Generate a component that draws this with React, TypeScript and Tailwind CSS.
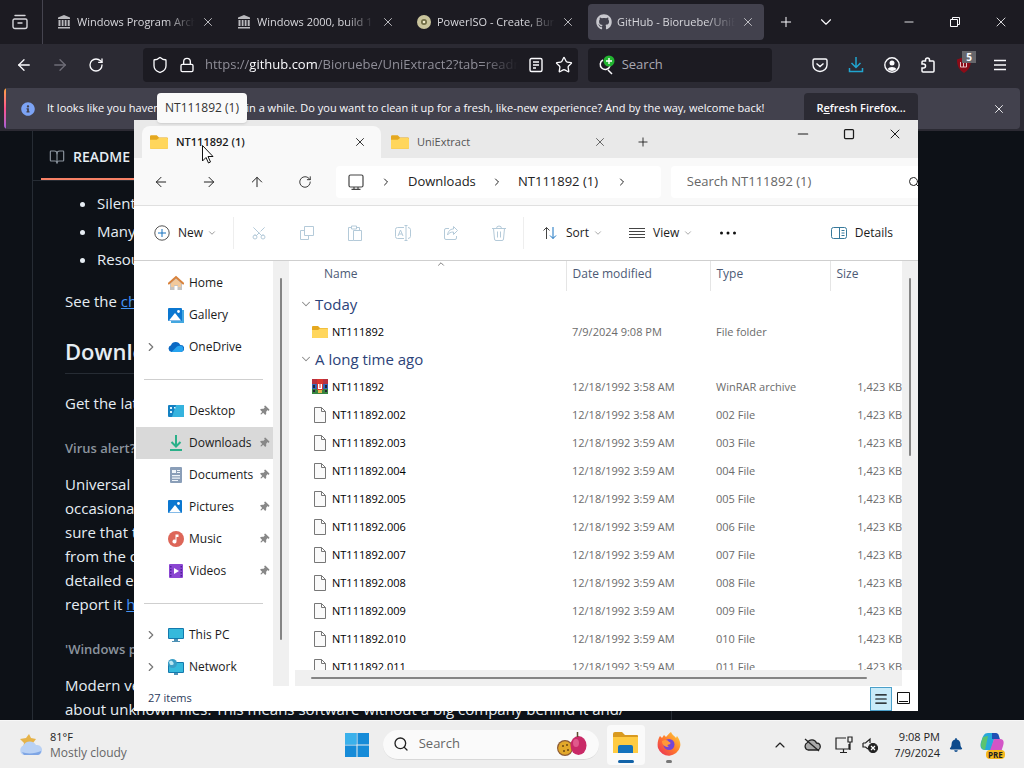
import type { ReactNode } from 'react'
import {
  AlignJustify,
  ArrowLeft,
  ArrowRight,
  ArrowUp,
  BookOpen,
  ChevronDown,
  ChevronRight,
  ChevronUp,
  Lock,
  Minus,
  Plus,
  RotateCw,
  Scissors,
  Search,
  Shield,
  Square,
  Star,
  X,
} from 'lucide-react'
import { FaBell, FaGithub, FaInfoCircle, FaThumbtack } from 'react-icons/fa'

const browserTabs = [
  { title: 'Windows Program Archive', icon: 'archive' },
  { title: 'Windows 2000, build 1', icon: 'archive' },
  { title: 'PowerISO - Create, Burn', icon: 'disc' },
  { title: 'GitHub - Bioruebe/UniExtract2', icon: 'github', active: true },
]

const places = [
  { name: 'Home', icon: 'home' },
  { name: 'Gallery', icon: 'gallery' },
  { name: 'OneDrive', icon: 'onedrive', expandable: true },
]

const pinned = [
  { name: 'Desktop', icon: 'desktop', pin: true },
  { name: 'Downloads', icon: 'downloads', pin: true, selected: true },
  { name: 'Documents', icon: 'documents', pin: true },
  { name: 'Pictures', icon: 'pictures', pin: true },
  { name: 'Music', icon: 'music', pin: true },
  { name: 'Videos', icon: 'videos', pin: true },
]

const devices = [
  { name: 'This PC', icon: 'pc', expandable: true },
  { name: 'Network', icon: 'network', expandable: true },
]

const oldFiles = [
  { name: 'NT111892', date: '12/18/1992 3:58 AM', type: 'WinRAR archive', icon: 'rar' },
  { name: 'NT111892.002', date: '12/18/1992 3:58 AM', type: '002 File', icon: 'file' },
  { name: 'NT111892.003', date: '12/18/1992 3:59 AM', type: '003 File', icon: 'file' },
  { name: 'NT111892.004', date: '12/18/1992 3:59 AM', type: '004 File', icon: 'file' },
  { name: 'NT111892.005', date: '12/18/1992 3:59 AM', type: '005 File', icon: 'file' },
  { name: 'NT111892.006', date: '12/18/1992 3:59 AM', type: '006 File', icon: 'file' },
  { name: 'NT111892.007', date: '12/18/1992 3:59 AM', type: '007 File', icon: 'file' },
  { name: 'NT111892.008', date: '12/18/1992 3:59 AM', type: '008 File', icon: 'file' },
  { name: 'NT111892.009', date: '12/18/1992 3:59 AM', type: '009 File', icon: 'file' },
  { name: 'NT111892.010', date: '12/18/1992 3:59 AM', type: '010 File', icon: 'file' },
  { name: 'NT111892.011', date: '12/18/1992 3:59 AM', type: '011 File', icon: 'file' },
]

function FolderIcon({ className = 'size-4' }: { className?: string }) {
  return (
    <svg viewBox="0 0 16 16" className={`shrink-0 ${className}`}>
      <path d="M0 3a1 1 0 0 1 1-1h5l2 2h7a1 1 0 0 1 1 1v8a1 1 0 0 1-1 1H1a1 1 0 0 1-1-1z" fill="#e5a81f" />
      <path d="M0 6h6l2-1.5h7a1 1 0 0 1 1 1V13a1 1 0 0 1-1 1H1a1 1 0 0 1-1-1z" fill="#ffd65c" />
    </svg>
  )
}

function MonitorShape({ y = 1 }: { y?: number }) {
  return (
    <g>
      <rect x="0" y={y} width="16" height="11" rx="1" fill="#1479ad" />
      <rect x="1" y={y + 1} width="14" height="9" fill="#35b9dc" />
      <path d={`M6 ${y + 11}h4v2h2v1H4v-1h2z`} fill="#4d91b5" />
    </g>
  )
}

function PlaceIcon({ name }: { name: string }) {
  return (
    <svg viewBox="0 0 16 16" className="size-4 shrink-0">
      {name === 'home' && (
        <g>
          <path d="M2 7 8 2l6 5v8h-4.500v-4h-3v4H2z" fill="#c5c3c1" />
          <path d="M3 8.500 8 4l5 4.500V12h-3v-2H6v2H3z" fill="#f3c99a" />
          <path d="M.8 8.500 8 2l7.200 6.500" fill="none" stroke="#d9823b" strokeWidth="2" strokeLinecap="round" />
        </g>
      )}
      {(name === 'gallery' || name === 'pictures') && (
        <g>
          {name === 'gallery' && <path d="M3 3h13v13H3z" fill="#43a7e0" />}
          <rect x="0" y="1" width="14" height="13" rx="1" fill="#0b77d0" />
          <path d="M1 13.500 7 6l6 7.500z" fill="#fff" />
          <circle cx="10.500" cy="4.500" r="1.400" fill="#fff" />
        </g>
      )}
      {name === 'onedrive' && (
        <g>
          <path d="M3.500 13A3.500 3.500 0 0 1 3 6.200 5 5 0 0 1 12.300 6 3.500 3.500 0 0 1 13 13z" fill="#0a69c4" />
          <path d="M3.500 13 9 7.500a5 5 0 0 1 4-.7A3.200 3.200 0 0 1 13 13z" fill="#27a4ef" />
        </g>
      )}
      {name === 'desktop' && (
        <g>
          <rect x="0" y="2" width="16" height="12" rx="1" fill="#1481c2" />
          <path d="M8 2h7a1 1 0 0 1 1 1v10a1 1 0 0 1-1 1H4z" fill="#35b3de" />
          <path d="M2 4h2v2H2zM2 8h2v2H2zM6 4h1.500v1.500H6z" fill="#dff5ff" />
        </g>
      )}
      {name === 'downloads' && (
        <g fill="none" stroke="#2bb089" strokeWidth="2">
          <path d="M8 0v11M3.500 7 8 11.500 12.500 7M2 15h12" />
        </g>
      )}
      {name === 'documents' && (
        <g>
          <rect x="2" y="0" width="12" height="16" rx="1" fill="#8a9eb8" />
          <path d="M4 3h4v3H4zM9 3h3v1H9zM9 5h3v1H9zM4 8h8v1.200H4zM4 10.500h8v1.200H4zM4 13h6v1H4z" fill="#f0f5fa" />
        </g>
      )}
      {name === 'music' && (
        <g>
          <circle cx="8" cy="8" r="8" fill="#dd6658" />
          <path d="M7.500 3.500h3V6h-2v4.500a2 2 0 1 1-1-1.700z" fill="#fff" />
        </g>
      )}
      {name === 'videos' && (
        <g>
          <rect x="1" y="1" width="14" height="14" rx="1" fill="#8b46d2" />
          <path
            d="M2 3h1.500v1.500H2zM2 6h1.500v1.500H2zM2 9h1.500v1.500H2zM2 12h1.500v1.500H2zM12.500 3H14v1.500h-1.500zM12.500 6H14v1.500h-1.500zM12.500 9H14v1.500h-1.500zM12.500 12H14v1.500h-1.500z"
            fill="#4d2098"
          />
          <path d="M6 5v6l5-3z" fill="#fff" />
        </g>
      )}
      {name === 'pc' && <MonitorShape />}
      {name === 'network' && (
        <g>
          <MonitorShape y={3} />
          <circle cx="4.500" cy="4.500" r="4.500" fill="#3a9ec6" />
          <path d="M1 3c2-2 3-1 4 0s1 3-1 3-2 0-3-3z" fill="#b9e6f2" />
        </g>
      )}
    </svg>
  )
}

function FileIcon({ kind }: { kind: string }) {
  if (kind === 'folder') return <FolderIcon />
  if (kind === 'rar') {
    return (
      <svg viewBox="0 0 16 16" className="size-4 shrink-0">
        <path d="M0 0h16v5H0z" fill="#b8303e" />
        <path d="M0 5h16v5H0z" fill="#3564b8" />
        <path d="M0 10h16v5H0z" fill="#378440" />
        <path d="M5 0h6v11H5z" fill="#d8352f" />
        <path d="M6 5h1v4h.5V5h1v4H9V5h1v5H6z" fill="#fff" />
        <path d="M1 6h2v3H1zM13 6h2v3h-2zM1 11h2v2H1zM13 11h2v2h-2z" fill="#262332" />
        <path d="M6 11h4v3H6z" fill="#e4b44c" />
      </svg>
    )
  }
  return (
    <svg viewBox="0 0 16 16" className="size-4 shrink-0">
      <path d="M2.500.5h7l4 4v11h-11zM9.500.5v4h4" fill="#fafafa" stroke="#777" />
    </svg>
  )
}

function TabIcon({ name }: { name: string }) {
  if (name === 'github') return <FaGithub className="size-4 shrink-0 text-[#c8c8ce]" />
  if (name === 'archive') {
    return (
      <svg viewBox="0 0 16 16" className="size-4 shrink-0" fill="#b9b9bd">
        <path d="M8 1l6 2.500V5H2V3.500zM2.500 6h2v6h-2zM5.700 6h1.800v6H5.700zM8.700 6h1.800v6H8.700zM11.700 6h2v6h-2zM2 13h12v1.500H2z" />
      </svg>
    )
  }
  return (
    <svg viewBox="0 0 16 16" className="size-4 shrink-0">
      <circle cx="8" cy="8" r="7" fill="#c9c49c" />
      <circle cx="8" cy="8" r="3" fill="#6f6c45" />
      <circle cx="8" cy="8" r="1.300" fill="#f1edcc" />
    </svg>
  )
}

function IconButton({ label, children, className = '' }: { label: string; children: ReactNode; className?: string }) {
  return (
    <button aria-label={label} className={`flex shrink-0 items-center justify-center ${className}`}>
      {children}
    </button>
  )
}

function BrowserTabs() {
  return (
    <div className="flex h-11 shrink-0 items-center bg-[#1c1b22] text-[#fbfbfe]">
      <IconButton label="Recent browsing" className="h-full w-[43px] border-r border-[#45444f] pr-0.5">
        <svg viewBox="0 0 16 16" className="size-4" fill="none" stroke="#d5d5da" strokeWidth="1.400">
          <path
            d="M3 1.500h10M1 6.500a1.500 1.500 0 0 1 1.500-1.500h11a1.500 1.500 0 0 1 1.500 1.500v6a2 2 0 0 1-2 2H3a2 2 0 0 1-2-2zM6 9h4"
            strokeLinecap="round"
          />
        </svg>
      </IconButton>
      <div className="flex gap-1 pl-[5px]">
        {browserTabs.map((tab) => (
          <div
            key={tab.title}
            className={`flex h-9 w-44 items-center gap-[5px] rounded px-2 ${tab.active ? 'bg-[#42414d]' : ''}`}
          >
            <TabIcon name={tab.icon} />
            <span className="flex-1 overflow-hidden text-[11px] whitespace-nowrap text-[#d8d8dd] [mask-image:linear-gradient(to_right,black_75%,transparent)]">
              {tab.title}
            </span>
            <IconButton label={`Close ${tab.title}`} className="size-4 text-[#cfcfd4]">
              <X className="size-3.5" strokeWidth={1.5} />
            </IconButton>
          </div>
        ))}
      </div>
      <IconButton label="New tab" className="w-11">
        <Plus className="size-4" strokeWidth={1.5} />
      </IconButton>
      <IconButton label="List all tabs" className="w-9">
        <ChevronDown className="size-[18px]" strokeWidth={1.5} />
      </IconButton>
      <div className="ml-auto flex">
        <IconButton label="Minimize" className="w-[46px]">
          <Minus className="size-3.5" strokeWidth={1.5} />
        </IconButton>
        <IconButton label="Restore" className="w-[46px]">
          <svg viewBox="0 0 12 12" className="size-3" fill="none" stroke="currentColor">
            <path d="M1.500 3.500h7v7h-7zM3.500 3V1.500h7v7H9" />
          </svg>
        </IconButton>
        <IconButton label="Close window" className="w-[46px]">
          <X className="size-4" strokeWidth={1.25} />
        </IconButton>
      </div>
    </div>
  )
}

function BrowserToolbar() {
  return (
    <div className="flex h-11 shrink-0 items-center bg-[#2b2a33] px-1.5 pb-0.5 text-[#fbfbfe]">
      <IconButton label="Back" className="w-9">
        <ArrowLeft className="size-[18px]" strokeWidth={1.75} />
      </IconButton>
      <IconButton label="Forward" className="w-9 text-[#6f6e78]">
        <ArrowRight className="size-[18px]" strokeWidth={1.75} />
      </IconButton>
      <IconButton label="Reload" className="w-9">
        <RotateCw className="size-4" strokeWidth={2} />
      </IconButton>
      <div className="ml-[29px] flex h-[34px] min-w-0 flex-[438] items-center rounded bg-[#1c1b22] pl-2">
        <Shield className="size-[18px] shrink-0" strokeWidth={1.75} />
        <Lock className="ml-2.5 size-4 shrink-0" strokeWidth={2} />
        <div className="ml-2.5 min-w-0 flex-1 overflow-hidden text-[13px] whitespace-nowrap text-[#8f8e98] [mask-image:linear-gradient(to_right,black_88%,transparent)]">
          https://<span className="text-[#fbfbfe]">github.com</span>/Bioruebe/UniExtract2?tab=readme-ov-file
        </div>
        <IconButton label="Reader view" className="ml-1 w-7">
          <svg viewBox="0 0 16 16" className="size-4" fill="none" stroke="currentColor" strokeWidth="1.400">
            <rect x="2" y="1.500" width="12" height="13" rx="1.500" />
            <path d="M5 5h6M5 8h6M5 11h3" />
          </svg>
        </IconButton>
        <IconButton label="Bookmark" className="w-7">
          <Star className="size-[18px]" strokeWidth={1.75} />
        </IconButton>
      </div>
      <div className="ml-2.5 flex h-[34px] min-w-0 flex-[181] items-center rounded bg-[#1c1b22] pl-2">
        <svg viewBox="0 0 20 20" className="size-5 shrink-0" fill="none">
          <path d="M12 15l4 4M14 11a5 5 0 1 1-7-6" stroke="#fbfbfe" strokeWidth="1.500" />
          <circle cx="13" cy="6" r="5.500" fill="#22b531" />
          <path d="M13 3v6M10 6h6" stroke="#fff" strokeWidth="1.400" />
        </svg>
        <input
          aria-label="Search the web"
          placeholder="Search"
          className="ml-1.5 w-full min-w-0 bg-transparent text-[13px] placeholder:text-[#aaa9b2]"
        />
      </div>
      <div className="ml-[30px] flex">
        <IconButton label="Save to Pocket" className="w-9">
          <svg viewBox="0 0 16 16" className="size-4" fill="none" stroke="currentColor" strokeWidth="1.400">
            <path d="M2.500 2h11a1.500 1.500 0 0 1 1.500 1.500V8A7 6.500 0 0 1 1 8V3.500A1.500 1.500 0 0 1 2.500 2zM4.500 6.500 8 9.500l3.500-3" />
          </svg>
        </IconButton>
        <IconButton label="Downloads" className="w-9 text-[#21a5cf]">
          <svg viewBox="0 0 16 16" className="size-4" fill="none" stroke="currentColor" strokeWidth="1.500">
            <path d="M8 0v10M3.500 6 8 10.500 12.500 6M1.500 11v3.500h13V11" />
          </svg>
        </IconButton>
        <IconButton label="Account" className="w-9">
          <svg viewBox="0 0 16 16" className="size-4" fill="none">
            <circle cx="8" cy="8" r="7.200" stroke="currentColor" strokeWidth="1.400" />
            <circle cx="8" cy="6" r="2.500" fill="currentColor" />
            <path d="M3.500 12a5 3.500 0 0 1 9 0 6 6 0 0 1-9 0z" fill="currentColor" />
          </svg>
        </IconButton>
        <IconButton label="Extensions" className="w-9">
          <svg viewBox="0 0 16 16" className="size-4" fill="none" stroke="currentColor" strokeWidth="1.500">
            <path d="M5.500 4V3a2 2 0 0 1 4 0v1H13a1 1 0 0 1 1 1v9a1 1 0 0 1-1 1H3a1 1 0 0 1-1-1v-3h1.500a2 2 0 0 0 0-4H2V5a1 1 0 0 1 1-1z" />
          </svg>
        </IconButton>
        <button aria-label="uBlock Origin" className="relative flex w-9 items-center justify-center">
          <svg viewBox="0 0 16 16" className="size-4">
            <path d="M8 0l7 2.500C15 9 13 13 8 16 3 13 1 9 1 2.500z" fill="#8b0c18" />
            <path d="M4.500 5v5h6V5M7.500 5v5" fill="none" stroke="#e7c2c5" />
          </svg>
          <span className="absolute -top-1.5 right-1.5 bg-[#66666b] px-1 text-[10px] leading-3 font-bold">5</span>
        </button>
        <IconButton label="Menu" className="w-9">
          <svg viewBox="0 0 16 16" className="size-4" stroke="currentColor" strokeWidth="1.500">
            <path d="M2 3.500h12M2 8h12M2 12.500h12" />
          </svg>
        </IconButton>
      </div>
    </div>
  )
}

function RefreshNotice() {
  return (
    <div className="h-[43px] shrink-0 bg-[#2b2a33] px-1 pb-0.5">
      <div className="flex h-full overflow-hidden rounded bg-[#42414d] text-[#fbfbfe]">
        <div className="w-0.5 bg-linear-to-b from-[#ffa436] via-[#ff4f8b] to-[#a05bd9]" />
        <div className="flex min-w-0 flex-1 items-center pl-[15px]">
          <FaInfoCircle className="size-3.5 shrink-0 text-[#7ca3f5]" />
          <span className="ml-3 text-[11px] whitespace-nowrap">
            It looks like you haven’t started Firefox in a while. Do you want to clean it up for a fresh, like-new experience?
            And by the way, welcome back!
          </span>
          <button className="ml-10 h-8 shrink-0 rounded bg-[#2b2a33] px-3 text-[11px] font-semibold">
            R<span className="underline">e</span>fresh Firefox...
          </button>
          <IconButton label="Dismiss" className="mr-3.5 ml-auto">
            <X className="size-3.5" strokeWidth={1.5} />
          </IconButton>
        </div>
      </div>
    </div>
  )
}

function ReadmePage() {
  return (
    <main className="min-h-0 flex-1 overflow-hidden bg-[#0d1117] pl-8 text-[#e6edf3]">
      <div className="mr-[352px] border-x border-[#262c34]">
        <div className="flex h-[50px] items-end border-b border-[#262c34] px-2">
          <a href="#readme" className="flex h-11 items-center gap-2 border-b-2 border-[#f78166] px-2 text-sm font-semibold">
            <BookOpen className="size-4 text-[#8b949e]" strokeWidth={1.75} />
            README
          </a>
        </div>
        <article className="px-8 text-[15px] leading-6 whitespace-nowrap">
          <ul className="list-disc space-y-1 pt-2.5 pl-8">
            <li>Silent mode</li>
            <li>Many more</li>
            <li>Resources</li>
          </ul>
          <p className="mt-[18px]">
            See the <a href="#changelog" className="text-[#4493f8] underline">changelog</a>
          </p>
          <h2 className="mt-6 border-b border-[#262c34] pb-2 text-[22px] leading-7 font-semibold">Download</h2>
          <p className="mt-[17px]">Get the latest version</p>
          <h5 className="mt-[21px] text-[13px] font-semibold text-[#8b949e]">Virus alert?</h5>
          <p className="mt-3">
            Universal Extractor
            <br />
            occasionally
            <br />
            sure that the
            <br />
            from the official
            <br />
            detailed explanation
            <br />
            report it <a href="#report" className="text-[#4493f8] underline">here</a>
          </p>
          <h5 className="mt-[21px] text-[13px] font-semibold text-[#8b949e]">'Windows protected</h5>
          <p className="mt-3">
            Modern versions
            <br />
            about unknown files. This means software without a big company behind it and/
          </p>
        </article>
      </div>
    </main>
  )
}

function ExplorerTabs() {
  return (
    <div className="flex h-[38px] shrink-0 items-end bg-[#e9e9e9] pl-2">
      <div className="flex h-8 w-[239px] items-center rounded-t-lg bg-[#f9f9f9] pr-3.5 pl-2">
        <FolderIcon className="size-[18px]" />
        <span className="ml-2 flex-1 text-[11px] font-semibold">NT111892 (1)</span>
        <IconButton label="Close NT111892 (1)">
          <X className="size-3.5" strokeWidth={1.5} />
        </IconButton>
      </div>
      <div className="flex h-8 w-[240px] items-center pr-3.5 pl-2.5 text-[#555]">
        <FolderIcon className="size-[18px]" />
        <span className="ml-2 flex-1 text-[11px]">UniExtract</span>
        <IconButton label="Close UniExtract">
          <X className="size-3.5" strokeWidth={1.5} />
        </IconButton>
      </div>
      <IconButton label="New tab" className="h-8 w-11">
        <Plus className="size-3.5" strokeWidth={1.5} />
      </IconButton>
      <div className="ml-auto flex h-full items-start">
        <IconButton label="Minimize" className="h-7 w-[46px]">
          <Minus className="size-4" strokeWidth={1.75} />
        </IconButton>
        <IconButton label="Maximize" className="h-7 w-[46px]">
          <Square className="size-3" strokeWidth={2.5} />
        </IconButton>
        <IconButton label="Close" className="h-7 w-[46px]">
          <X className="size-4" strokeWidth={1.5} />
        </IconButton>
      </div>
    </div>
  )
}

function AddressRow() {
  return (
    <div className="flex h-12 shrink-0 items-center overflow-hidden border-b border-[#e0e0e0] bg-[#f9f9f9] pl-[3px] text-[#222]">
      <IconButton label="Back" className="w-12">
        <ArrowLeft className="size-4" strokeWidth={1.5} />
      </IconButton>
      <IconButton label="Forward" className="w-12">
        <ArrowRight className="size-4" strokeWidth={1.5} />
      </IconButton>
      <IconButton label="Up" className="w-12">
        <ArrowUp className="size-4" strokeWidth={1.5} />
      </IconButton>
      <IconButton label="Refresh" className="w-12">
        <RotateCw className="size-3.5" strokeWidth={1.5} />
      </IconButton>
      <div className="ml-[7px] flex h-8 flex-[330] items-center rounded bg-white pl-3 text-[13px]">
        <svg viewBox="0 0 16 16" className="size-4" fill="none" stroke="#444" strokeWidth="1.200">
          <rect x="1" y="1" width="14" height="12" rx="1.500" />
          <path d="M6 13v2M10 13v2M3.500 15.400h9" />
        </svg>
        <ChevronRight className="ml-4 size-3" strokeWidth={2} />
        <a href="#downloads" className="w-[89px] pl-4">
          Downloads
        </a>
        <ChevronRight className="ml-2.5 size-3" strokeWidth={2} />
        <a href="#nt111892" className="ml-[15px] w-[98px] whitespace-nowrap">
          NT111892 (1)
        </a>
        <ChevronRight className="size-3" strokeWidth={2} />
      </div>
      <div className="ml-2.5 flex h-8 flex-[244] items-center overflow-hidden rounded-l bg-white pl-4">
        <input
          aria-label="Search folder"
          placeholder="Search NT111892 (1)"
          className="min-w-0 flex-1 bg-transparent text-[13px] placeholder:text-[#666]"
        />
        <Search className="-mr-0.5 size-3 shrink-0" strokeWidth={2} />
      </div>
    </div>
  )
}

function CommandBar() {
  const tools = [
    { label: 'Copy', path: 'M5.500 1.500h9v9h-9zM5.500 5.500h-4v9h8v-4' },
    { label: 'Paste', path: 'M4.500 2.500h-3v13h5M4.500 1h5v3h-5zM9.500 2.500h3v3M6.500 5.500h8v10h-8z' },
    { label: 'Rename', path: 'M9 2.500H2.500a2 2 0 0 0-2 2v7a2 2 0 0 0 2 2H9M13 2.500a2.500 2.500 0 0 1 2.500 2v7a2.500 2.500 0 0 1-2.500 2M11 .5v15M9.500.5h3M9.500 15.500h3M3 11l2.500-6L8 11M4 9h3' },
    { label: 'Share', path: 'M6 3.500H3a1.500 1.500 0 0 0-1.500 1.500v8a1.500 1.500 0 0 0 1.500 1.500h9a1.500 1.500 0 0 0 1.500-1.500v-2M10.500 1.500l4 4-4 4v-2.500c-3 0-4.500 1-6 3 .5-3 2-6 6-6z' },
    { label: 'Delete', path: 'M1 3.500h14M5.500 3.500a2.500 2.500 0 0 1 5 0M2.500 3.500l1 10.500a1.500 1.500 0 0 0 1.500 1.500h6a1.500 1.500 0 0 0 1.500-1.500l1-10.500M6.500 6.500v6M9.500 6.500v6' },
  ]
  return (
    <div className="flex h-[55px] shrink-0 items-center border-b border-[#cfcfcf] bg-white pl-5 text-xs text-[#1b1b1b]">
      <button className="flex w-[79px] items-center">
        <svg viewBox="0 0 16 16" className="size-4" fill="none">
          <circle cx="8" cy="8" r="7.200" stroke="#555" />
          <path d="M8 4v8M4 8h8" stroke="#1672c0" />
        </svg>
        <span className="ml-2">New</span>
        <ChevronDown className="ml-1 size-2.5 text-[#888]" />
      </button>
      <div className="flex h-8 border-x border-[#eee] pl-px">
        <IconButton label="Cut" className="w-12 text-[#b4cad9]">
          <Scissors className="size-4 -rotate-90" strokeWidth={1.5} />
        </IconButton>
        {tools.map(({ label, path }) => (
          <IconButton key={label} label={label} className="w-12 text-[#b4cad9]">
            <svg viewBox="0 0 16 16" className="size-4" fill="none" stroke="currentColor">
              <path d={path} />
            </svg>
          </IconButton>
        ))}
      </div>
      <button className="ml-[18px] flex w-[87px] items-center">
        <svg viewBox="0 0 16 16" className="size-4" fill="none">
          <path d="M4.500 14V2.500M1.500 5.500l3-3 3 3" stroke="#444" />
          <path d="M11 2v11.500M8 10.500l3 3 3-3" stroke="#1672c0" />
        </svg>
        <span className="ml-2">Sort</span>
        <ChevronDown className="ml-1 size-2.5 text-[#999]" />
      </button>
      <button className="flex w-[91px] items-center">
        <svg viewBox="0 0 16 16" className="size-4" stroke="#444">
          <path d="M0 3.500h16M0 6.500h16M0 9.500h16M0 12.500h16" />
        </svg>
        <span className="ml-2">View</span>
        <ChevronDown className="ml-1 size-2.5 text-[#999]" />
      </button>
      <IconButton label="See more">
        <svg viewBox="0 0 16 16" className="size-4" fill="#111">
          <circle cx="1.500" cy="8" r="1.500" />
          <circle cx="8" cy="8" r="1.500" />
          <circle cx="14.500" cy="8" r="1.500" />
        </svg>
      </IconButton>
      <button className="mr-[25px] ml-auto flex items-center gap-2">
        <svg viewBox="0 0 16 16" className="size-4" fill="none" stroke="#37799b">
          <rect x=".5" y="2.500" width="15" height="11" rx="2" />
          <path d="M8.500 2.500v11M10.500 5.500h3M10.500 8h3M10.500 10.500h3" />
        </svg>
        Details
      </button>
    </div>
  )
}

type Place = { name: string; icon: string; pin?: boolean; selected?: boolean; expandable?: boolean }

function PlaceList({ items }: { items: Place[] }) {
  return (
    <ul>
      {items.map((item) => (
        <li key={item.name}>
          <a
            href={`#${item.icon}`}
            className={`ml-0.5 flex h-8 items-center pr-1 pl-2 ${item.selected ? 'bg-[#d9d9d9]' : ''}`}
          >
            <span className="w-6 shrink-0">
              {item.expandable && <ChevronRight className="size-3.5 text-[#777]" strokeWidth={2} />}
            </span>
            <PlaceIcon name={item.icon} />
            <span className="ml-[5px] flex-1">{item.name}</span>
            {item.pin && <FaThumbtack className="size-2.5 rotate-45 text-[#888]" />}
          </a>
        </li>
      ))}
    </ul>
  )
}

function Sidebar() {
  return (
    <nav className="flex w-[155px] shrink-0 overflow-hidden text-xs text-[#1b1b1b]">
      <div className="flex-1 pt-1.5">
        <PlaceList items={places} />
        <div className="flex h-8 items-center px-2.5">
          <hr className="w-full border-[#cfcfcf]" />
        </div>
        <PlaceList items={pinned} />
        <div className="flex h-8 items-center px-2.5">
          <hr className="w-full border-[#cfcfcf]" />
        </div>
        <PlaceList items={devices} />
      </div>
      <div className="flex w-4 justify-center bg-[#f0f0f0] pt-[17px] pb-[46px]">
        <div className="w-0.5 rounded-full bg-[#858585]" />
      </div>
    </nav>
  )
}

function GroupRow({ title }: { title: string }) {
  return (
    <tr className="h-[27px]">
      <th colSpan={4} scope="rowgroup" className="pb-0.5 pl-2.5 text-left text-[15px] leading-5 font-normal text-[#2c4379]">
        <span className="flex items-center gap-0.5">
          <ChevronDown className="size-3.5 text-[#888]" strokeWidth={1.75} />
          {title}
        </span>
      </th>
    </tr>
  )
}

function FileRow({ name, date, type, icon, size }: { name: string; date: string; type: string; icon: string; size?: string }) {
  return (
    <tr className="h-7 text-[11px] whitespace-nowrap text-[#6b6b6b]">
      <td className="pl-[23px] text-black">
        <span className="flex items-center gap-1">
          <FileIcon kind={icon} />
          {name}
        </span>
      </td>
      <td className="pl-1.5">{date}</td>
      <td className="pl-1.5">{type}</td>
      <td className="text-right">{size}</td>
    </tr>
  )
}

function FileList() {
  return (
    <div className="flex min-w-0 flex-1">
      <div className="flex min-w-0 flex-1 flex-col">
        <div className="relative min-h-0 flex-1 overflow-hidden">
          <ChevronUp className="absolute -top-0.5 left-[147px] size-2.5 text-[#666]" />
          <table className="w-full table-fixed text-xs">
            <colgroup>
              <col />
              <col className="w-36" />
              <col className="w-[120px]" />
              <col className="w-[72px]" />
            </colgroup>
            <thead>
              <tr className="h-[30px] text-left text-[#4c5a75]">
                <th className="border-r border-[#e5e5e5] pb-1 pl-[35px] font-normal">Name</th>
                <th className="border-r border-[#e5e5e5] pb-1 pl-1.5 font-normal">Date modified</th>
                <th className="border-r border-[#e5e5e5] pb-1 pl-1.5 font-normal">Type</th>
                <th className="pb-1 pl-1.5 font-normal">Size</th>
              </tr>
            </thead>
            <tbody>
              <GroupRow title="Today" />
              <FileRow name="NT111892" date="7/9/2024 9:08 PM" type="File folder" icon="folder" />
              <GroupRow title="A long time ago" />
              {oldFiles.map((file) => (
                <FileRow key={file.name} {...file} size="1,423 KB" />
              ))}
            </tbody>
          </table>
        </div>
        <div className="ml-1.5 flex h-4 shrink-0 items-center bg-[#f0f0f0] pr-[35px] pl-4">
          <div className="h-0.5 w-full rounded-full bg-[#858585]" />
        </div>
      </div>
      <div className="mb-4 flex w-4 shrink-0 justify-center bg-[#f0f0f0] pt-[17px]">
        <div className="h-[178px] w-0.5 rounded-full bg-[#858585]" />
      </div>
    </div>
  )
}

function ExplorerWindow() {
  return (
    <section
      aria-label="File Explorer"
      className="absolute top-[120px] right-[106px] bottom-[57px] left-[134px] flex flex-col overflow-hidden bg-white text-[#1b1b1b]"
    >
      <ExplorerTabs />
      <AddressRow />
      <CommandBar />
      <div className="flex min-h-0 flex-1">
        <Sidebar />
        <FileList />
      </div>
      <div className="flex h-[25px] shrink-0 items-center pr-2 pl-3.5 text-[11px] text-[#2c3a5c]">
        <span>27 items</span>
        <IconButton label="Details view" className="ml-auto h-6 w-[22px] border border-[#4a9fc9] bg-[#c9ebf9]">
          <AlignJustify className="size-3.5 text-black" strokeWidth={2} />
        </IconButton>
        <IconButton label="Large icons view" className="ml-[5px]">
          <svg viewBox="0 0 13 13" className="size-[13px]" fill="none" stroke="#111">
            <path d="M.5.500h12v11H.5zM2 9.500h9" />
          </svg>
        </IconButton>
      </div>
    </section>
  )
}

function WeatherIcon() {
  return (
    <svg viewBox="0 0 26 26" className="size-[26px]">
      <path d="M11 2l2 4 5 1-3 4 0 5-5-2-5 2 1-5-4-4 6-1z" fill="#e6b348" />
      <path d="M6 23a5 5 0 0 1-.5-9.500 7 7 0 0 1 12.500-.5 5 5 0 0 1 2 10z" fill="#b9d1f4" />
      <path d="M4 20c4 2 13 2 19-1a4 4 0 0 1-3 4H6z" fill="#7ea5e4" />
    </svg>
  )
}

function FruitIcon() {
  return (
    <svg viewBox="0 0 34 26" className="h-[26px] w-[34px]">
      <circle cx="10" cy="17" r="8" fill="#8c5a35" />
      <circle cx="10" cy="17" r="6.800" fill="#e2a82b" />
      <path d="M7 14h2v2H7zM11 13h2v2h-2zM8 19h2v2H8zM12 18h2v2h-2z" fill="#8a5f18" />
      <ellipse cx="23.500" cy="14.500" rx="8" ry="9.500" fill="#c92a67" />
      <ellipse cx="21" cy="12" rx="3" ry="4" fill="#e05a8c" />
      <path d="M22.500 6V1" stroke="#5c4a2c" strokeWidth="1.500" />
    </svg>
  )
}

function FirefoxIcon() {
  return (
    <svg viewBox="0 0 24 24" className="size-6">
      <defs>
        <linearGradient id="flame" x1="1" y1="0" x2="0" y2="1">
          <stop offset="0" stopColor="#ffd93b" />
          <stop offset=".5" stopColor="#ff7a2c" />
          <stop offset="1" stopColor="#e8285d" />
        </linearGradient>
      </defs>
      <path
        d="M3 4l2 2 2-3 2 2c2-2 3-4 5-5 1 3 4 4 5 6l1-2c3 4 4 8 3 11a11.500 11.500 0 0 1-22 1C0 12 1 7 3 4z"
        fill="url(#flame)"
      />
      <circle cx="12" cy="12.500" r="5.500" fill="#7545d6" />
      <path d="M5 9c4-2 6-1 7 1 2 0 2 2 0 2.500-2 0-2 1.500 0 2.500-4 0-7-2-7-6z" fill="#ff9838" />
    </svg>
  )
}

function TrayIcons() {
  return (
    <div className="flex items-center text-[#222]">
      <IconButton label="Show hidden icons" className="w-7">
        <ChevronUp className="size-4" strokeWidth={1.75} />
      </IconButton>
      <IconButton label="OneDrive offline" className="w-9">
        <svg viewBox="0 0 18 16" className="h-4 w-[18px]" fill="#aaa" stroke="#222" strokeWidth="1.300">
          <path d="M5 13a4 4 0 0 1-.5-7.500 5 5 0 0 1 9 .5A3.500 3.500 0 0 1 14 13z" />
          <path d="M2 2l14 12" stroke="#222" />
        </svg>
      </IconButton>
      <IconButton label="Network" className="w-7">
        <svg viewBox="0 0 18 18" className="size-[18px]" fill="none" stroke="currentColor" strokeWidth="1.200">
          <path d="M11 2H1v11h13V8M5 16.500h7M8.500 13v3.500M13 1h4v5h-4zM15 6v8" />
        </svg>
      </IconButton>
      <IconButton label="Volume" className="w-6">
        <svg viewBox="0 0 16 16" className="size-4" fill="none" stroke="currentColor" strokeWidth="1.200">
          <path d="M1 6h2.500L8 2v4M1 6v4h2.500L6 12" />
          <circle cx="11" cy="11" r="4.500" fill="#222" />
          <path d="M9 9l4 4M13 9l-4 4" stroke="#fff" />
        </svg>
      </IconButton>
    </div>
  )
}

function Taskbar() {
  return (
    <footer className="flex h-12 shrink-0 items-center border-t border-[#f7f7f7] bg-[#eeeeee] text-[11px] text-[#222]">
      <button className="flex flex-[346] items-center gap-1.5 pl-[18px] text-left leading-4">
        <WeatherIcon />
        <span>
          81°F
          <br />
          <span className="text-xs text-[#666]">Mostly cloudy</span>
        </span>
      </button>
      <div className="flex items-center">
        <IconButton label="Start">
          <svg viewBox="0 0 24 24" className="size-6">
            <path d="M0 0h11.500v11.500H0zM12.500 0H24v11.500H12.500zM0 12.500h11.500V24H0zM12.500 12.500H24V24H12.500z" fill="#168bd8" />
            <path d="M0 0h11.500v11.500H0z" fill="#3bb1eb" />
          </svg>
        </IconButton>
        <label className="ml-3.5 flex h-[30px] w-[216px] items-center rounded-full border-b border-[#d8d8d8] bg-[#fafafa] px-2.5">
          <Search className="size-4 shrink-0" strokeWidth={2} />
          <input
            aria-label="Taskbar search"
            placeholder="Search"
            className="ml-2.5 min-w-0 flex-1 bg-transparent text-[13px] placeholder:text-[#666]"
          />
          <FruitIcon />
        </label>
        <button
          aria-label="File Explorer"
          className="ml-2 flex h-10 w-[38px] flex-col items-center justify-end rounded bg-[#fafafa]"
        >
          <svg viewBox="0 0 26 26" className="size-[26px]">
            <path d="M0 4a2 2 0 0 1 2-2h7l3 3h12a1 1 0 0 1 1 1v4H0z" fill="#d99a20" />
            <path d="M0 7h25v16H0z" fill="#ffcb42" />
            <path d="M5 17a2 2 0 0 1 2-2h11a2 2 0 0 1 2 2v6H5z" fill="#1472bc" />
          </svg>
          <span className="mt-1 mb-0.5 h-[3px] w-4 rounded-full bg-[#1263a8]" />
        </button>
        <button aria-label="Firefox" className="ml-1.5 flex h-10 w-9 flex-col items-center justify-end">
          <FirefoxIcon />
          <span className="mt-1 mb-0.5 h-[3px] w-1.5 rounded-full bg-[#777]" />
        </button>
      </div>
      <div className="flex flex-[336] items-center justify-end pr-5">
        <TrayIcons />
        <time className="ml-3 text-right leading-4">
          9:08 PM
          <br />
          7/9/2024
        </time>
        <IconButton label="Notifications" className="ml-2 w-4">
          <FaBell className="size-3.5 text-[#0d4b8c]" />
        </IconButton>
        <button aria-label="Copilot preview" className="relative ml-4">
          <svg viewBox="0 0 24 24" className="size-6">
            <path d="M8 0h8l-5 17H5c-5 0-5-5-4-8 2-6 3-9 7-9z" fill="#27a8db" />
            <path d="M3 4l5-1-3 14c-6-1-4-8-2-13z" fill="#5bc46f" />
            <path d="M12 0h4c3 0 3 4 4 6h-8z" fill="#204fb4" />
            <path d="M14 6h6c5 0 4 5 2 10-1 5-4 7-7 7H8z" fill="#d355c7" />
          </svg>
          <span className="absolute -bottom-0.5 left-1.5 rounded-sm bg-[#f5b81c] px-0.5 text-[8px] leading-[9px] font-bold">
            PRE
          </span>
        </button>
      </div>
    </footer>
  )
}

function Pointer() {
  return (
    <svg viewBox="0 0 12 19" className="absolute top-[145px] left-[202px] h-[19px] w-3">
      <path d="M.5.500v15.500l3.500-3.500 2.500 5.500 2-1-2.500-5.500h5z" fill="#fff" stroke="#111" />
    </svg>
  )
}

export default function App() {
  return (
    <div className="relative flex h-screen flex-col overflow-hidden font-['Open_Sans','Noto_Sans',sans-serif]">
      <BrowserTabs />
      <BrowserToolbar />
      <RefreshNotice />
      <ReadmePage />
      <Taskbar />
      <ExplorerWindow />
      <div
        role="tooltip"
        className="absolute top-[93px] left-[157px] flex h-[30px] w-[90px] items-center justify-center rounded bg-[#fafafa] text-xs whitespace-nowrap text-[#333] shadow"
      >
        NT111892 (1)
      </div>
      <Pointer />
    </div>
  )
}
